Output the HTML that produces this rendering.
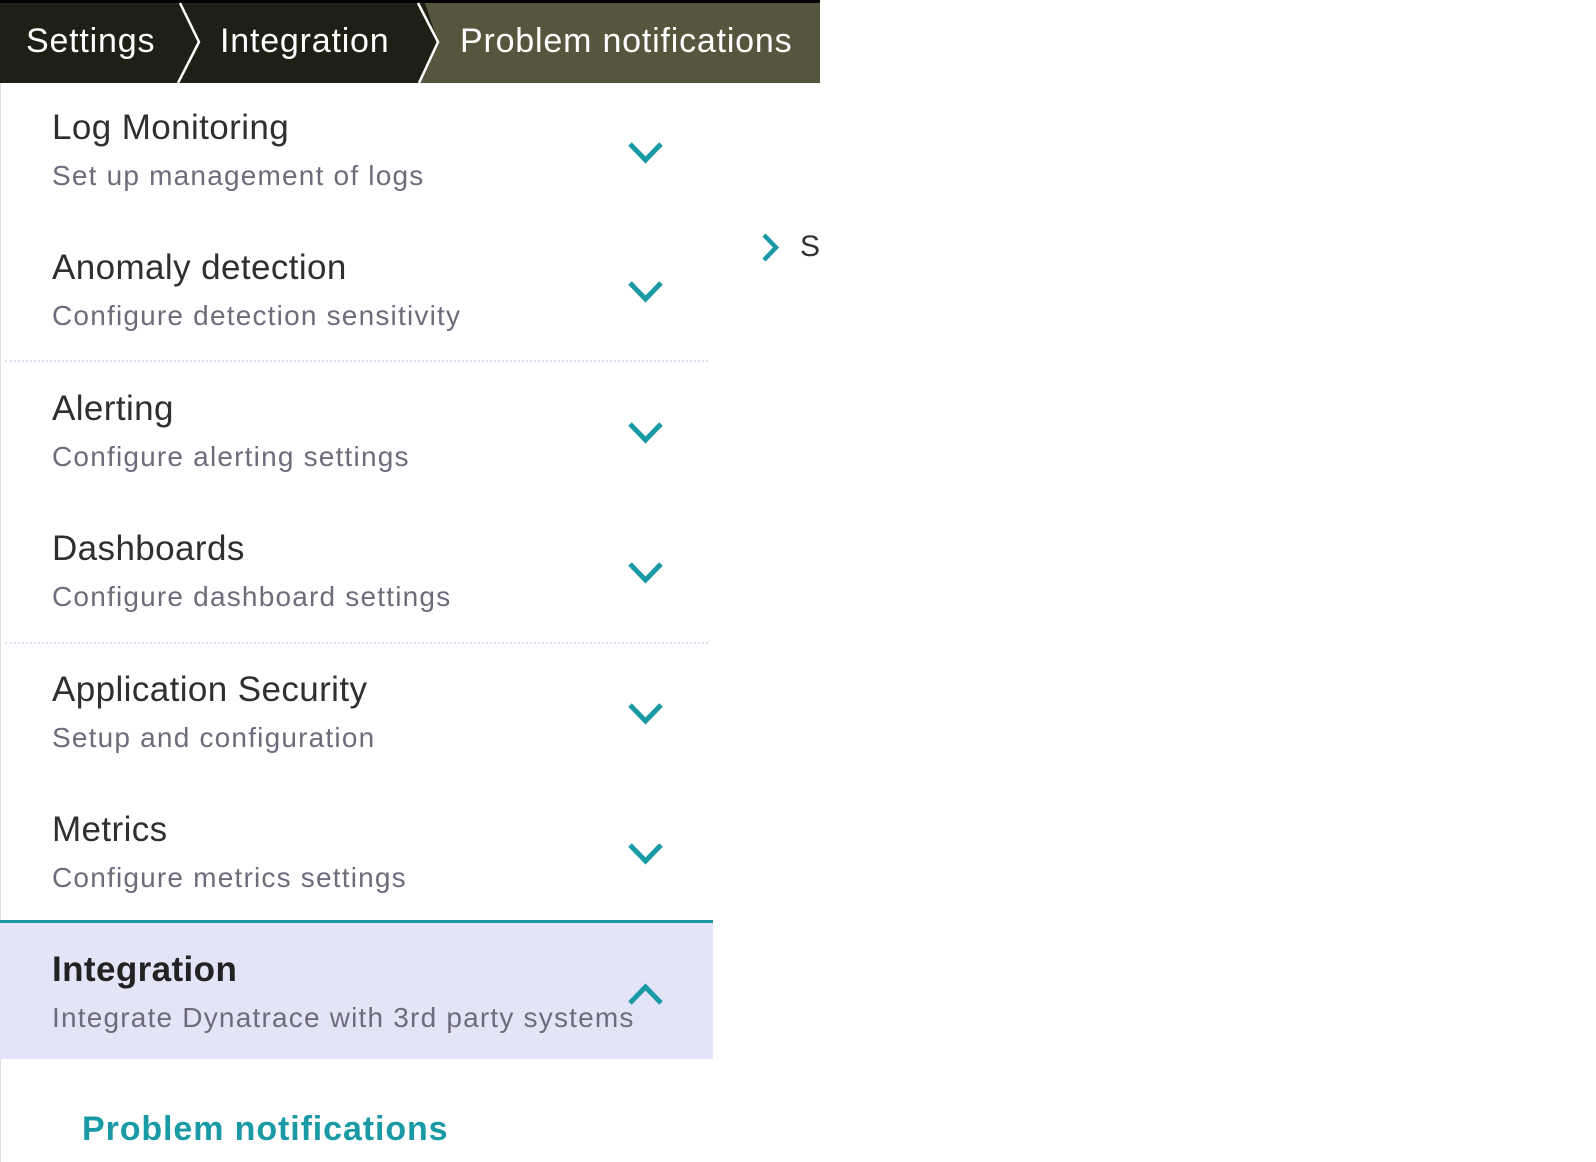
<!DOCTYPE html>
<html><head><meta charset="utf-8"><style>
html,body{margin:0;padding:0;background:#fff;width:1596px;height:1162px;overflow:hidden;font-family:"Liberation Sans",sans-serif}
.bar{position:absolute;left:0;top:0;width:820px;height:83px}
.bc{position:absolute;top:22px;color:#fff;font-size:34px;white-space:nowrap;letter-spacing:0.8px}
.side{position:absolute;left:0;top:83px;width:1px;height:1079px;background:#ddd}
.t{position:absolute;left:52px;font-size:35px;color:#2f2f2f;white-space:nowrap;letter-spacing:0.4px}
.s{position:absolute;left:52px;font-size:28px;color:#6e6c7c;white-space:nowrap;letter-spacing:1.2px}
.chev{position:absolute;left:627px;width:37px;height:24px}
.dot{position:absolute;left:5px;width:703px;border-top:2px dotted #dcdcf0;height:0}
</style></head><body>
<svg class="bar" width="820" height="83" viewBox="0 0 820 83">
<rect x="0" y="0" width="820" height="83" fill="#1f1f15"/>
<polygon points="425,3 820,3 820,83 420,83 438,42" fill="#56563f"/>
<rect x="0" y="0" width="820" height="3" fill="#000"/>
<polyline points="180,3 199,42 178,83" fill="none" stroke="#fff" stroke-width="2.5"/>
<polyline points="418,3 438,42 419,83" fill="none" stroke="#fff" stroke-width="2.5"/>
</svg>
<div class="bc" style="left:26px">Settings</div>
<div class="bc" style="left:220px">Integration</div>
<div class="bc" style="left:460px">Problem notifications</div>
<div class="side"></div>

<div class="dot" style="top:360px"></div>
<div class="dot" style="top:642px"></div>

<div class="t" style="top:108px">Log Monitoring</div><div class="s" style="top:160px">Set up management of logs</div>
<svg class="chev" style="top:141px" viewBox="0 0 37 24"><polyline points="3,3 18.5,19 34,3" fill="none" stroke="#1a9aa5" stroke-width="5"/></svg>

<div class="t" style="top:248px">Anomaly detection</div><div class="s" style="top:300px">Configure detection sensitivity</div>
<svg class="chev" style="top:280px" viewBox="0 0 37 24"><polyline points="3,3 18.5,19 34,3" fill="none" stroke="#1a9aa5" stroke-width="5"/></svg>

<div class="t" style="top:389px">Alerting</div><div class="s" style="top:441px">Configure alerting settings</div>
<svg class="chev" style="top:421px" viewBox="0 0 37 24"><polyline points="3,3 18.5,19 34,3" fill="none" stroke="#1a9aa5" stroke-width="5"/></svg>

<div class="t" style="top:529px">Dashboards</div><div class="s" style="top:581px">Configure dashboard settings</div>
<svg class="chev" style="top:561px" viewBox="0 0 37 24"><polyline points="3,3 18.5,19 34,3" fill="none" stroke="#1a9aa5" stroke-width="5"/></svg>

<div class="t" style="top:670px">Application Security</div><div class="s" style="top:722px">Setup and configuration</div>
<svg class="chev" style="top:702px" viewBox="0 0 37 24"><polyline points="3,3 18.5,19 34,3" fill="none" stroke="#1a9aa5" stroke-width="5"/></svg>

<div class="t" style="top:810px">Metrics</div><div class="s" style="top:862px">Configure metrics settings</div>
<svg class="chev" style="top:842px" viewBox="0 0 37 24"><polyline points="3,3 18.5,19 34,3" fill="none" stroke="#1a9aa5" stroke-width="5"/></svg>

<div style="position:absolute;left:0;top:920px;width:713px;height:3px;background:#1a9aa5"></div>
<div style="position:absolute;left:0;top:923px;width:713px;height:136px;background:#e4e4f9"></div>
<div class="t" style="top:950px;font-weight:bold;color:#222">Integration</div>
<div class="s" style="top:1002px">Integrate Dynatrace with 3rd party systems</div>
<svg class="chev" style="top:982px" viewBox="0 0 37 24"><polyline points="3,21 18.5,5 34,21" fill="none" stroke="#1a9aa5" stroke-width="5"/></svg>

<div style="position:absolute;left:82px;top:1110px;font-size:34px;font-weight:bold;color:#1a9aa5;white-space:nowrap;letter-spacing:0.9px">Problem notifications</div>

<svg style="position:absolute;left:760px;top:232px" width="22" height="31" viewBox="0 0 22 31"><polyline points="4,3 16,15.5 4,28" fill="none" stroke="#1a9aa5" stroke-width="4.5"/></svg>
<div style="position:absolute;left:800px;top:230px;width:20px;overflow:hidden;font-size:30px;color:#333">Se</div>
</body></html>
